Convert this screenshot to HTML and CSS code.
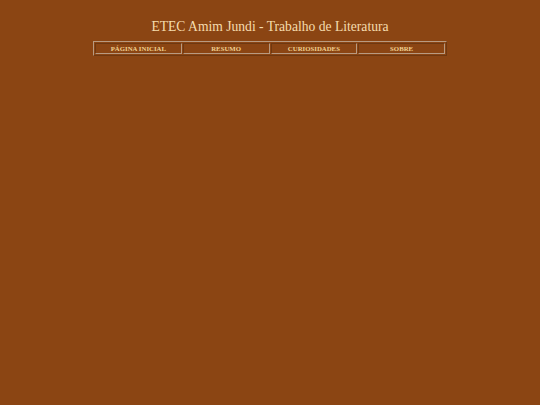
FILE: index.html
```html
<!DOCTYPE html>
<html lang="pt-BR">
<head>
<meta charset="utf-8">
<title>ETEC Amim Jundi - Trabalho de Literatura</title>
<link rel="stylesheet" href="styles.css">
</head>
<body>
<h1 class="title">ETEC Amim Jundi - Trabalho de Literatura</h1>
<nav class="menu">
  <a class="menu-item" href="#">PÁGINA INICIAL</a>
  <a class="menu-item" href="#">RESUMO</a>
  <a class="menu-item" href="#">CURIOSIDADES</a>
  <a class="menu-item" href="#">SOBRE</a>
</nav>
</body>
</html>
```
FILE: styles.css
```css
html, body {
  margin: 0;
  padding: 0;
  background: #8b4513;
  height: 100%;
}
body {
  font-family: "Liberation Serif", "Times New Roman", serif;
  color: #f5dcae;
}
.title {
  margin: 0;
  padding-top: 19px;
  font-size: 13.6px;
  font-weight: normal;
  line-height: 16px;
  text-align: center;
  color: #f5dcae;
}
.menu {
  display: flex;
  width: 350px;
  margin: 6px auto 0;
  padding: 1px;
  gap: 1px;
  border: 1px solid;
  border-color: #b89a80 #6e3810 #6e3810 #b89a80;
}
.menu-item {
  flex: 1;
  height: 9px;
  line-height: 9px;
  border: 1px solid;
  border-color: #6e3810 #b89a80 #b89a80 #6e3810;
  text-align: center;
  font-size: 6.8px;
  font-weight: bold;
  color: #f0d090;
  text-decoration: none;
}
```
